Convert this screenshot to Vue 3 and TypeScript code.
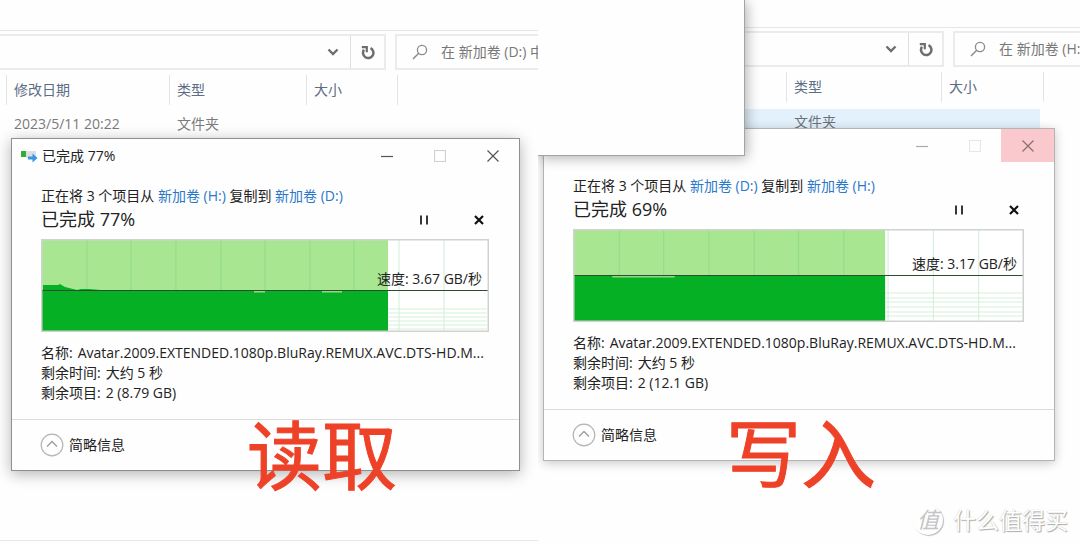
<script setup lang="ts">
interface Pane {
  id: string
  drive: string
  modified: string
  title: string
  from: string
  to: string
  percent: number
  speed: string
  left: string
  note: string
  fill: number
  line: number
  rows: number[]
  peaks: string
  dips: { x: number; w: number }[]
}

const columns = [46, 90, 135, 180, 224, 269, 313, 358, 403]

const panes: Pane[] = [
  {
    id: 'read',
    drive: 'D:',
    modified: '2023/5/11 20:22',
    title: '已完成 77%',
    from: '新加卷 (H:)',
    to: '新加卷 (D:)',
    percent: 77,
    speed: '3.67 GB/秒',
    left: '2 (8.79 GB)',
    note: '读取',
    fill: 347,
    line: 52,
    rows: [70, 74, 78, 82, 86, 90],
    peaks: '2,52 2,46 17,46 19,45 24,48 32,50 36,51 40,50 48,50 60,51 62,52',
    dips: [{ x: 213, w: 11 }, { x: 281, w: 20 }],
  },
  {
    id: 'write',
    drive: 'H:',
    modified: '',
    title: '',
    from: '新加卷 (D:)',
    to: '新加卷 (H:)',
    percent: 69,
    speed: '3.17 GB/秒',
    left: '2 (12.1 GB)',
    note: '写入',
    fill: 310,
    line: 47,
    rows: [64, 69, 73, 78, 83, 87],
    peaks: '2,47 2,46 20,46 21,47 173,47 174,46 188,46 189,47 204,47 205,46 207,47',
    dips: [{ x: 39, w: 62 }],
  },
]
</script>

<template>
  <main class="screen">
    <section v-for="p in panes" :key="p.id" class="pane" :class="p.id">
      <div class="toolbar">
        <div class="address">
          <input class="path" type="text" aria-label="地址" />
          <button class="tool" type="button" aria-label="展开">
            <svg width="12" height="8" viewBox="0 0 12 8"><path d="M1.500 1.500L6 6L10.500 1.500" fill="none" stroke="#6e6e6e" stroke-width="2.400" /></svg>
          </button>
          <button class="tool refresh" type="button" aria-label="刷新">
            <svg width="14" height="15" viewBox="0 0 14 15">
              <path d="M9.500 3.200A5.200 5.200 0 1 1 3 4.800" fill="none" stroke="#6e6e6e" stroke-width="2.500" />
              <path d="M.8 2.200H5.800V7.200" fill="none" stroke="#6e6e6e" stroke-width="2.200" />
            </svg>
          </button>
        </div>
        <label class="search">
          <svg width="16" height="16" viewBox="0 0 16 16">
            <circle cx="10" cy="6" r="4.600" fill="none" stroke="#8a8a8a" stroke-width="1.300" />
            <path d="M6.700 9.300L1 15" stroke="#8a8a8a" stroke-width="1.500" />
          </svg>
          <input type="text" :placeholder="`在 新加卷 (${p.drive}) 中搜索`" aria-label="搜索" />
        </label>
      </div>

      <table class="files">
        <colgroup><col class="c-date" /><col class="c-type" /><col class="c-size" /><col /></colgroup>
        <thead>
          <tr><th><span v-if="p.modified">修改日期</span></th><th>类型</th><th>大小</th><th></th></tr>
        </thead>
        <tbody>
          <tr><td>{{ p.modified }}</td><td>文件夹</td><td></td><td></td></tr>
        </tbody>
      </table>

      <article class="dialog">
        <header class="titlebar">
          <svg v-if="p.title" class="copyicon" width="18" height="14" viewBox="0 0 18 14">
            <rect x="6" y="2" width="10" height="7" fill="#dcdfe2" />
            <rect x="1" y="2" width="5" height="6" fill="#2fae3a" />
            <polygon points="8,7.500 12.500,7.500 12.500,4.500 17.500,9 12.500,13.500 12.500,10.500 8,10.500" fill="#3b95e0" />
          </svg>
          <span class="caption">{{ p.title }}</span>
          <button type="button" aria-label="最小化"><svg width="12" height="12" viewBox="0 0 12 12"><path d="M0 6.500H12" /></svg></button>
          <button type="button" class="max" aria-label="最大化" disabled><svg width="12" height="12" viewBox="0 0 12 12"><path d="M.5 .5H11.500V11.500H.5Z" /></svg></button>
          <button type="button" class="close" aria-label="关闭"><svg width="12" height="12" viewBox="0 0 12 12"><path d="M.5 .5L11.500 11.500M11.500 .5L.5 11.500" /></svg></button>
        </header>

        <div class="body">
          <p class="route">正在将 3 个项目从 <a href="#">{{ p.from }}</a> 复制到 <a href="#">{{ p.to }}</a></p>
          <div class="status">
            <h2>已完成 {{ p.percent }}%</h2>
            <button type="button" aria-label="暂停"><svg width="10" height="10" viewBox="0 0 10 10"><path d="M2 .5V9.500M8 .5V9.500" stroke="#222" stroke-width="1.800" /></svg></button>
            <button type="button" aria-label="取消"><svg width="10" height="10" viewBox="0 0 10 10"><path d="M1 1L9 9M9 1L1 9" stroke="#111" stroke-width="2.200" /></svg></button>
          </div>

          <div class="chart">
            <svg viewBox="0 0 448 93" preserveAspectRatio="none">
              <rect width="448" height="93" fill="#fff" />
              <path v-for="y in p.rows" :key="y" :d="`M2 ${y}H446`" stroke="#d4f0d9" />
              <path v-for="x in columns" :key="x" :d="`M${x} 1V92`" stroke="#d0eed7" />
              <rect x="1" y="1" :width="p.fill - 1" height="91" fill="#a8e692" />
              <template v-for="x in columns" :key="x">
                <path v-if="x < p.fill" :d="`M${x} 1V92`" stroke="#97dd88" stroke-width="1.200" />
              </template>
              <rect x="1" :y="p.line" :width="p.fill - 1" :height="92 - p.line" fill="#06b025" />
              <polygon :points="p.peaks" fill="#06b025" />
              <rect v-for="d in p.dips" :key="d.x" :x="d.x" :y="p.line" :width="d.w" height="1.500" fill="#8fd884" />
              <path :d="`M1 ${p.line - 0.5}H447`" stroke="#2f4a33" stroke-width="1.200" />
              <rect x=".75" y=".75" width="446.500" height="91.500" fill="none" stroke="#d0d2d0" stroke-width="1.500" />
            </svg>
            <span class="speed" :style="{ bottom: `${95 - p.line}px` }">速度: {{ p.speed }}</span>
          </div>

          <dl class="details">
            <div><dt>名称:</dt><dd>Avatar.2009.EXTENDED.1080p.BluRay.REMUX.AVC.DTS-HD.M...</dd></div>
            <div><dt>剩余时间:</dt><dd>大约 5 秒</dd></div>
            <div><dt>剩余项目:</dt><dd>{{ p.left }}</dd></div>
          </dl>
        </div>

        <footer class="foot">
          <button type="button">
            <svg width="24" height="24" viewBox="0 0 24 24" fill="none">
              <circle cx="12" cy="12" r="10.800" stroke="#b4b4b4" stroke-width="1.200" />
              <path d="M7 13.500L12 8.500L17 13.500" stroke="#a0a0a0" stroke-width="1.500" />
            </svg>
            简略信息
          </button>
        </footer>
      </article>

      <div v-if="p.id === 'write'" class="blank"></div>
      <strong class="note">{{ p.note }}</strong>
    </section>

    <div class="watermark">
      <span class="seal">值</span>
      <span>什么值得买</span>
    </div>
  </main>
</template>

<style>
body { margin: 0; background: #fefefe; }
</style>

<style scoped>
* { box-sizing: border-box; }
.screen {
  position: relative;
  display: flex;
  min-height: 100vh;
  overflow: hidden;
  background: #fefefe;
  color: #222;
  font: 14px/20px "Open Sans", "Noto Sans CJK SC", sans-serif;
}
button { padding: 0; border: 0; background: none; font: inherit; color: inherit; }
input { min-width: 0; padding: 0; border: 0; outline: 0; background: none; font: inherit; }
svg { display: block; flex: none; }

.pane { position: relative; flex: 538 1 0; min-width: 0; overflow: hidden; padding-top: 30px; }
.pane.write { flex-grow: 542; padding-top: 27px; }
.pane.read::after { content: ""; position: absolute; left: 0; right: 0; bottom: 4px; height: 1px; background: #e6e6e6; }

.toolbar { display: flex; gap: 9px; padding-top: 3px; border-top: 1px solid #e6e6e6; }
.address { display: flex; flex: 1; height: 36px; border: 2px solid #ebebeb; border-left: 0; }
.path { flex: 1; }
.tool { display: grid; place-items: center; width: 34px; }
.refresh { border-left: 1px solid #dedede; }
.search { display: flex; align-items: center; flex: 0 0 143px; border: 2px solid #ebebeb; border-right: 0; padding-left: 15px; gap: 13px; overflow: hidden; }
.write .search { flex-basis: 127px; }
.search input { flex: 0 0 170px; }
.search input::placeholder { color: #777; opacity: 1; }

.files { width: 100%; margin-top: 5px; border-collapse: separate; border-spacing: 0; table-layout: fixed; }
.read .files { margin-left: 6px; }
.c-date { width: 163px; }
.c-type { width: 137px; }
.c-size { width: 91px; }
.write .c-date { width: 248px; }
.write .c-type { width: 155px; }
.write .c-size { width: 102px; }
.files th { height: 30px; padding: 0 7px; border-left: 1px solid #e4e4e4; text-align: left; font-weight: 400; color: #5c6d84; }
.files td { height: 32px; padding: 6px 8px 0; color: #7a7a7a; white-space: nowrap; }
.write .files th:first-child { border: 0; }
.write .files td { padding-top: 3px; vertical-align: top; }
.write .files td:not(:last-child) { background: #e3f1fc; border-top: 7px solid #fefefe; color: #6c7178; }
.write .files td:nth-child(3) { border-right: 3px solid #fefefe; }

.dialog {
  position: absolute;
  top: 138px;
  left: 11px;
  right: 18px;
  border: 1px solid #8f8f8f;
  background: #fefefe;
  box-shadow: 0 3px 14px rgba(0, 0, 0, .3);
}
.write .dialog { top: 128px; left: 5px; right: 25px; border-color: #b4b4b4; box-shadow: 0 2px 10px rgba(0, 0, 0, .22); }
.titlebar { display: flex; align-items: center; height: 33px; padding-left: 8px; }
.caption { flex: 1; padding-left: 4px; }
.titlebar button { display: grid; place-items: center; width: 53px; height: 33px; }
.titlebar button path { fill: none; stroke: #555; stroke-width: 1.200; }
.titlebar .max path { stroke: #d0d0d0; }
.write .titlebar button path { stroke: #aaa; }
.write .titlebar .max path { stroke: #e6e6e6; }
.write .titlebar .close { background: #f9c9cd; }
.write .titlebar .close path { stroke: #8c6f72; }

.body { padding: 14px 30px 16px 29px; }
.route { margin: 0; white-space: nowrap; }
a { color: #2a78c8; text-decoration: none; }
.status { display: flex; align-items: center; height: 28px; }
.status h2 { flex: 1; margin: 0; font-size: 18px; line-height: 26px; padding-bottom: 2px; font-weight: 400; }
.status button { display: grid; place-items: center; width: 20px; height: 20px; margin-left: 35px; }
.status button:first-of-type { margin: 0; }
.chart { position: relative; margin-top: 5px; }
.chart svg { width: 100%; height: 93px; }
.speed { position: absolute; right: 7px; white-space: nowrap; }
.details { margin: 11px 0 0; }
.details div { display: flex; gap: 5px; white-space: nowrap; }
.details dd { margin: 0; }
.foot { display: flex; align-items: center; height: 51px; padding-left: 28px; border-top: 1px solid #dcdcdc; }
.foot button { display: flex; align-items: center; gap: 5px; }

.blank {
  position: absolute;
  top: 0;
  left: 0;
  width: 207px;
  height: 156px;
  border: solid #a2a4a4;
  border-width: 0 1px 1px 0;
  background: #fefefe;
  box-shadow: 2px 2px 12px rgba(0, 0, 0, .3);
}
.note { position: absolute; top: 397px; left: 247px; font-size: 75px; line-height: 110px; font-weight: 400; color: #ee4228; font-family: "Noto Sans CJK SC", sans-serif; -webkit-text-stroke: 1px #ee4228; }
.write .note { left: 188px; top: 395px; }

.watermark {
  position: absolute;
  right: 12px;
  bottom: 10px;
  display: flex;
  align-items: center;
  gap: 10px;
  font-size: 23px;
  line-height: 30px;
  color: #fff;
  text-shadow: 1px 1px 1px #aaa, 0 0 1px #bbb;
}
.seal { width: 30px; height: 30px; border-radius: 50%; text-align: center; line-height: 29px; font-size: 22px; font-style: italic; color: #c4c4c4; text-shadow: none; box-shadow: 1px 1px 1px #bbb; }
</style>
